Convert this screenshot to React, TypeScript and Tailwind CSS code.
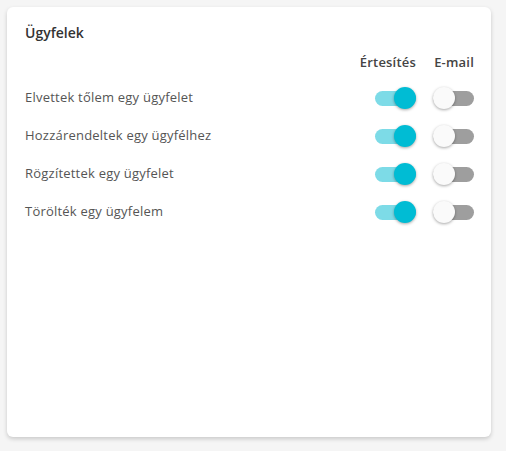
const rows = [
  { label: 'Elvettek tőlem egy ügyfelet', notify: true, email: false },
  { label: 'Hozzárendeltek egy ügyfélhez', notify: true, email: false },
  { label: 'Rögzítettek egy ügyfelet', notify: true, email: false },
  { label: 'Törölték egy ügyfelem', notify: true, email: false },
];

const Toggle = ({ on }: { on: boolean }) => (
  <div className="relative h-[22px] w-[41px] flex items-center">
    <div className={`h-[15px] w-full rounded-full ${on ? 'bg-[#7ddbe7]' : 'bg-[#9e9e9e]'}`} />
    <div
      className={`absolute top-0 h-[22px] w-[22px] rounded-full shadow-[0_1px_3px_rgba(0,0,0,0.35)] ${
        on ? 'right-0 bg-[#00bcd4]' : 'left-0 bg-[#fafafa]'
      }`}
    />
  </div>
);

const App = () => {
  return (
    <div className="min-h-[451px] w-[506px] bg-[#f5f5f5] p-[7px] font-['Open_Sans',sans-serif]">
      <section className="h-[430px] w-[484px] rounded-md bg-white pl-[18px] pr-[17px] pt-[13px] shadow-[0_2px_4px_rgba(0,0,0,0.18)]">
        <h2 className="text-[14px] font-semibold leading-[26px] text-[#333]">Ügyfelek</h2>

        <div className="mt-[6px] grid grid-cols-[1fr_auto_auto] items-center gap-x-[17px]">
          <div />
          <div className="mb-[7px] text-right text-[13px] font-semibold leading-[20px] tracking-[0.2px] text-[#444]">Értesítés</div>
          <div className="mb-[7px] text-right text-[13px] font-semibold leading-[20px] tracking-[0.2px] text-[#444]">E-mail</div>

          {rows.map((row) => (
            <div key={row.label} className="contents">
              <div className="flex h-[38px] items-center text-[13px] tracking-[0.22px] text-[#555]">{row.label}</div>
              <div className="flex justify-end">
                <Toggle on={row.notify} />
              </div>
              <div className="flex justify-end">
                <Toggle on={row.email} />
              </div>
            </div>
          ))}
        </div>
      </section>
    </div>
  );
};

export default App;
